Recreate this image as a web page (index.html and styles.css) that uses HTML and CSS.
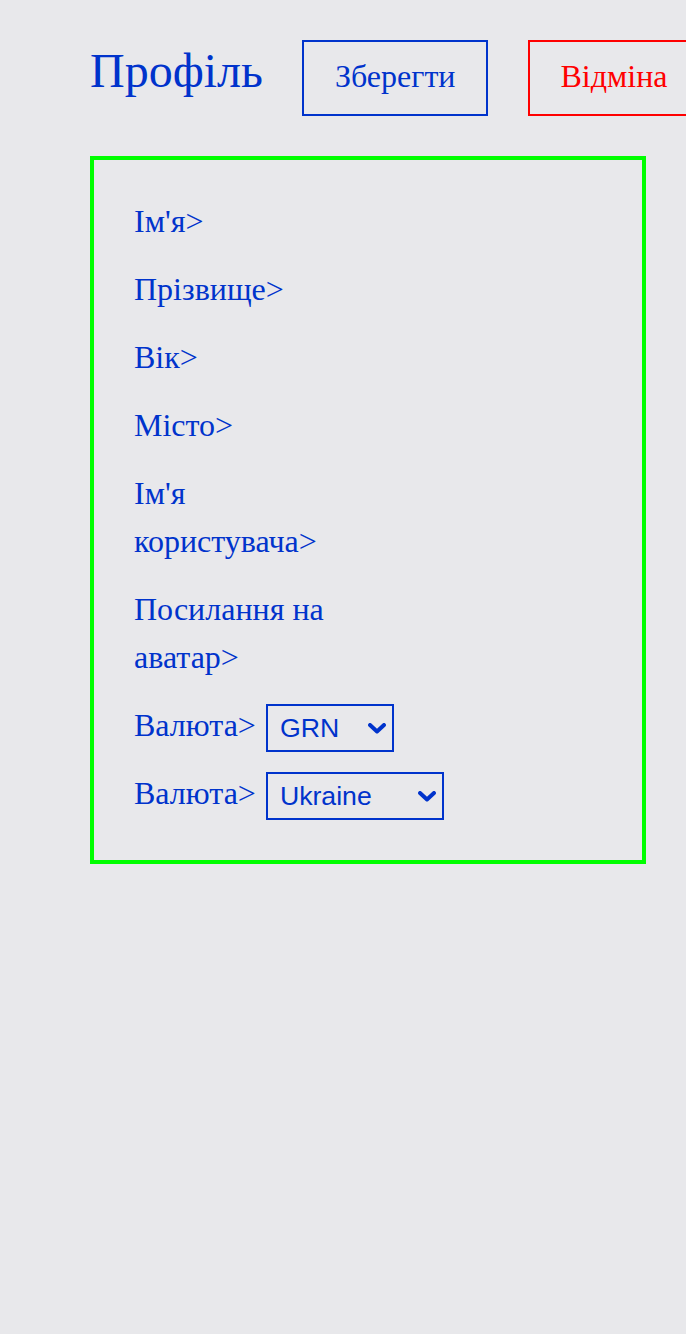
FILE: index.html
```html
<!DOCTYPE html>
<html lang="uk">
<head>
<meta charset="utf-8">
<title>Профіль</title>
<link rel="stylesheet" href="styles.css">
</head>
<body>
<div class="page">
  <header class="header">
    <h1 class="title">Профіль</h1>
    <button class="btn btn-save">Зберегти</button>
    <button class="btn btn-cancel">Відміна</button>
  </header>
  <form class="card">
    <div class="row"><span class="label">Ім'я&gt;</span></div>
    <div class="row"><span class="label">Прізвище&gt;</span></div>
    <div class="row"><span class="label">Вік&gt;</span></div>
    <div class="row"><span class="label">Місто&gt;</span></div>
    <div class="row"><span class="label">Ім'я користувача&gt;</span></div>
    <div class="row"><span class="label">Посилання на аватар&gt;</span></div>
    <div class="row">
      <span class="label">Валюта&gt;</span>
      <span class="select-wrap">
        <select class="select select-currency"><option>GRN</option><option>USD</option><option>EUR</option></select>
        <svg class="chev" viewBox="0 0 18 11" width="18" height="11"><polyline points="2,2 9,8.5 16,2" fill="none" stroke="#0033cc" stroke-width="4" stroke-linecap="round" stroke-linejoin="round"/></svg>
      </span>
    </div>
    <div class="row">
      <span class="label">Валюта&gt;</span>
      <span class="select-wrap">
        <select class="select select-country"><option>Ukraine</option><option>Poland</option></select>
        <svg class="chev" viewBox="0 0 18 11" width="18" height="11"><polyline points="2,2 9,8.5 16,2" fill="none" stroke="#0033cc" stroke-width="4" stroke-linecap="round" stroke-linejoin="round"/></svg>
      </span>
    </div>
  </form>
</div>
</body>
</html>
```
FILE: styles.css
```css
html, body {
  margin: 0;
  padding: 0;
  background: #e8e8eb;
}
body {
  font-family: "Liberation Serif", "Times New Roman", serif;
  color: #0033cc;
  overflow-x: hidden;
}
.page {
  padding: 40px 40px 40px 90px;
}
.header {
  display: flex;
  align-items: baseline;
  gap: 40px;
  flex-wrap: nowrap;
  width: max-content;
}
.title {
  margin: 0;
  font-size: 48px;
  font-weight: normal;
  line-height: 60px;
  flex-shrink: 0;
}
.btn {
  flex-shrink: 0;
  font-family: "Liberation Serif", "Times New Roman", serif;
  font-size: 32px;
  line-height: 40px;
  padding: 14px 31px 18px;
  background: transparent;
  border: 2px solid;
  border-radius: 0;
}
.btn-save {
  color: #0033cc;
  border-color: #0033cc;
  margin-left: -1px;
}
.btn-cancel {
  color: #ff0000;
  border-color: #ff0000;
  padding-left: 30px;
}
.card {
  margin-top: 40px;
  border: 4px solid #00ff00;
  padding: 40px;
  display: flex;
  flex-direction: column;
  gap: 20px;
}
.row {
  display: flex;
  align-items: flex-start;
  gap: 10px;
}
.label {
  font-size: 32px;
  line-height: 48px;
  max-width: 210px;
  margin: -3px 0 3px;
}
.select-wrap {
  position: relative;
  display: inline-block;
}
.select {
  appearance: none;
  -webkit-appearance: none;
  display: block;
  height: 48px;
  box-sizing: border-box;
  margin: 0;
  padding: 0 0 0 12px;
  border: 2px solid #0033cc;
  border-radius: 0;
  background: transparent;
  color: #0033cc;
  font-family: "Liberation Sans", Arial, sans-serif;
  font-size: 26.67px;
}
.select-currency { width: 128px; }
.select-country { width: 178px; }
.chev {
  position: absolute;
  right: 8px;
  top: 19px;
  pointer-events: none;
}
```
